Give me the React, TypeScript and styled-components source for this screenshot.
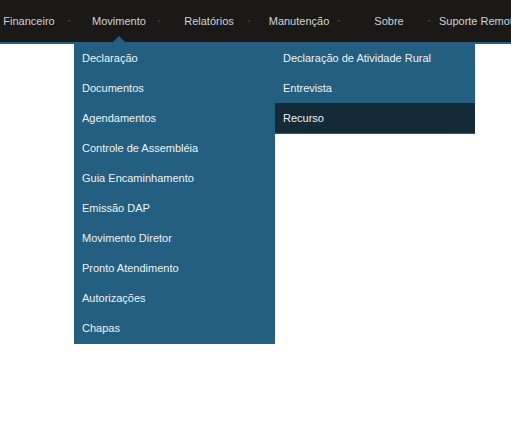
import React from "react";
import styled, { createGlobalStyle } from "styled-components";

const Global = createGlobalStyle`
  html, body { margin: 0; padding: 0; background: #ffffff; }
  body { font-family: "Liberation Sans", Arial, sans-serif; overflow: hidden; }
  #root { width: 511px; height: 437px; overflow: hidden; }
`;

const NavBar = styled.nav`
  height: 42px;
  background: #1b1918;
  border-bottom: 2px solid #235f80;
`;

const NavList = styled.ul`
  list-style: none;
  margin: 0 0 0 -16px;
  padding: 0;
  display: flex;
  height: 42px;
`;

const NavItem = styled.li`
  position: relative;
  flex: 0 0 90px;
  height: 42px;
  display: flex;
  align-items: center;
  justify-content: center;
  font-size: 11px;
  color: #d2d2d2;
  white-space: nowrap;
`;

const Caret = styled.span`
  position: absolute;
  right: 3px;
  top: 20px;
  width: 0;
  height: 0;
  border-left: 2px solid transparent;
  border-right: 2px solid transparent;
  border-top: 2px solid #3c3a39;
`;

const Pointer = styled.span`
  position: absolute;
  left: 39px;
  bottom: 0;
  width: 0;
  height: 0;
  border-left: 6px solid transparent;
  border-right: 6px solid transparent;
  border-bottom: 6px solid #235f80;
`;

const Dropdown = styled.ul`
  position: absolute;
  top: 43px;
  left: 0;
  width: 201px;
  margin: 0;
  padding: 0 0 1px;
  list-style: none;
  display: flex;
  flex-direction: column;
  background: #235f80;
  z-index: 2;
`;

const SubMenu = styled.ul`
  position: absolute;
  top: 0;
  left: 201px;
  width: 200px;
  margin: 0;
  padding: 0 0 1px;
  list-style: none;
  display: flex;
  flex-direction: column;
  background: #235f80;
`;

const MenuItem = styled.li<{ $hover?: boolean }>`
  position: relative;
  height: 30px;
  display: flex;
  align-items: center;
  padding-left: 8px;
  font-size: 11px;
  color: #eef3f6;
  background: ${(p) => (p.$hover ? "#132a37" : "transparent")};
  white-space: nowrap;
`;

const navItems = ["Financeiro", "Movimento", "Relatórios", "Manutenção", "Sobre", "Suporte Remoto"];

const movimento = [
  "Declaração",
  "Documentos",
  "Agendamentos",
  "Controle de Assembléia",
  "Guia Encaminhamento",
  "Emissão DAP",
  "Movimento Diretor",
  "Pronto Atendimento",
  "Autorizações",
  "Chapas",
];

const sub = ["Declaração de Atividade Rural", "Entrevista", "Recurso"];

export default function App() {
  return (
    <>
      <Global />
      <NavBar>
        <NavList>
          {navItems.map((n) => (
            <NavItem key={n}>
              {n}
              {n !== "Suporte Remoto" && <Caret />}
              {n === "Movimento" && (
                <>
                  <Pointer />
                  <Dropdown>
                    {movimento.map((m, i) => (
                      <MenuItem key={m}>
                        {m}
                        {i === 0 && (
                          <SubMenu>
                            {sub.map((s) => (
                              <MenuItem key={s} $hover={s === "Recurso"}>
                                {s}
                              </MenuItem>
                            ))}
                          </SubMenu>
                        )}
                      </MenuItem>
                    ))}
                  </Dropdown>
                </>
              )}
            </NavItem>
          ))}
        </NavList>
      </NavBar>
    </>
  );
}
